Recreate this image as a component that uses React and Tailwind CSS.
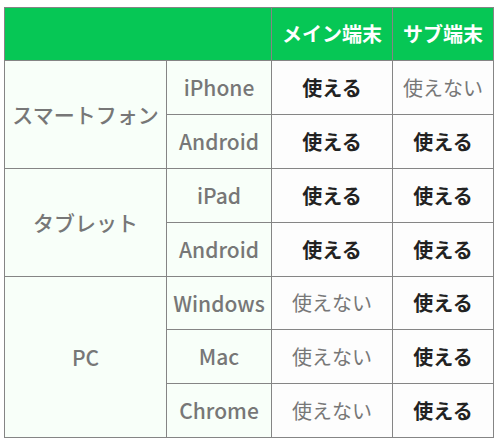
export default function App() {
  const label = "border border-[#858585] bg-[#f8fff9] text-center font-medium text-[21px] text-[#777777]";
  const ok = "border border-[#858585] bg-[#fdfdfd] text-center font-bold text-[#222222]";
  const ng = "border border-[#858585] bg-[#fdfdfd] text-center font-normal text-[#777777]";
  const OK = () => <td className={ok}>使える</td>;
  const NG = () => <td className={ng}>使えない</td>;
  return (
    <div className="w-[499px] h-[444px] bg-white pl-[4px] pt-[7px]" style={{ fontFamily: '"Noto Sans CJK JP", "Noto Sans", sans-serif' }}>
      <table className="table-fixed border-collapse w-[489px] text-[20px] leading-none">
        <colgroup>
          <col className="w-[162px]" />
          <col className="w-[105px]" />
          <col className="w-[121px]" />
          <col className="w-[101px]" />
        </colgroup>
        <thead>
          <tr className="h-[53px]">
            <th colSpan={2} className="border border-[#858585] bg-[#06c755]"></th>
            <th className="border border-[#858585] bg-[#06c755] text-white font-bold">メイン端末</th>
            <th className="border border-[#858585] bg-[#06c755] text-white font-bold">サブ端末</th>
          </tr>
        </thead>
        <tbody>
          <tr className="h-[54px]">
            <td rowSpan={2} className={label}>スマートフォン</td>
            <td className={label}>iPhone</td>
            <OK />
            <NG />
          </tr>
          <tr className="h-[54px]">
            <td className={label}>Android</td>
            <OK />
            <OK />
          </tr>
          <tr className="h-[54px]">
            <td rowSpan={2} className={label}>タブレット</td>
            <td className={label}>iPad</td>
            <OK />
            <OK />
          </tr>
          <tr className="h-[54px]">
            <td className={label}>Android</td>
            <OK />
            <OK />
          </tr>
          <tr className="h-[53px]">
            <td rowSpan={3} className={label}>PC</td>
            <td className={label}>Windows</td>
            <NG />
            <OK />
          </tr>
          <tr className="h-[54px]">
            <td className={label}>Mac</td>
            <NG />
            <OK />
          </tr>
          <tr className="h-[54px]">
            <td className={label}>Chrome</td>
            <NG />
            <OK />
          </tr>
        </tbody>
      </table>
    </div>
  );
}
